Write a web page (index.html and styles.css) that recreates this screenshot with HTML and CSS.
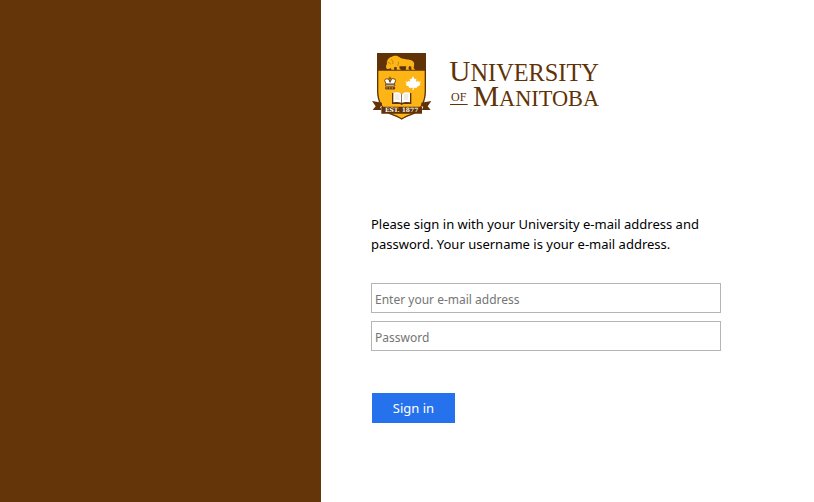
FILE: index.html
```html
<!DOCTYPE html>
<html lang="en">
<head>
<meta charset="utf-8">
<meta name="viewport" content="width=device-width, initial-scale=1">
<title>Sign In</title>
<link rel="stylesheet" href="styles.css">
</head>
<body>
<div class="page">
  <aside class="branding"></aside>
  <main class="content">
    <svg class="logo" viewBox="9 12 684 204" role="img" aria-label="University of Manitoba">
      <!-- shield -->
      <path fill="#fdb515" stroke="#5f3207" stroke-width="4" d="M29 17H172V128C172 160 158 184 136 197Q112 206 101 213Q90 206 66 197C44 184 29 160 29 128Z"/>
      <path fill="#5f3207" d="M27 15H174V68H27Z"/>
      <!-- bison -->
      <path fill="#fdb515" d="M56 62C53 58 54 52 57 48C55 39 61 29 70 27C77 22 89 21 95 28C103 35 116 33 126 36C138 38 140 47 138 53L137 61L142 65H130L130 56L124 54L121 61L125 65H113L115 55L94 55L95 62L100 65H86L86 57L78 58L79 65H70L69 60Q62 65 56 62Z"/>
      <path fill="none" stroke="#a86e0b" stroke-width="2" d="M59 43Q66 43 68 49M70 34Q76 39 75 48M91 41Q94 47 88 53"/>
      <!-- crown -->
      <g stroke="#5f3207" stroke-width="2.5" fill="#fff">
        <path d="M54 108L50 97Q52 90 59 93Q65 95 66 103Q68 95 74 92Q83 91 83 98L79 108Z"/>
        <path d="M66 101V86M61 91H71"/>
        <path d="M53 109H80V114H53Z"/>
        <path fill="#5f3207" d="M53 118H80V123H53Z"/>
      </g>
      <path stroke="#fff" stroke-width="2" stroke-dasharray="4 4" d="M55 120H79"/>
      <!-- maple leaf -->
      <path fill="#fff" d="M135 85L140 94L145 92L144 102L150 98L152 102L159 100L155 107L158 110L146 117L147 120L137 119V127H134V119L123 120L124 117L113 110L116 107L112 100L119 102L121 98L127 102L125 92L130 94Z"/>
      <!-- book -->
      <path fill="#5f3207" d="M72 135H97L101 138L105 135H130V168H106L101 171L96 168H72Z"/>
      <path fill="#fff" d="M76 134Q91 131 100 137V164Q89 160 76 163ZM102 137Q112 131 126 134V163Q112 160 102 164Z"/>
      <path fill="none" stroke="#c9b18f" stroke-width="1.5" d="M81 141H95M81 147H95M81 153H95M107 141H121M107 147H121M107 153H121"/>
      <!-- ribbon -->
      <path fill="#5f3207" d="M12 159L42 164V186H14L23 175ZM190 159L160 164V186H188L179 175Z"/>
      <path fill="#fff" d="M36 176L42 175V189ZM166 176L160 175V189Z"/>
      <path fill="#5f3207" d="M40 176H162V197H40Z"/>
      <text class="motto" x="101" y="193">EST. 1877</text>
      <!-- wordmark -->
      <text class="wordmark" x="244" y="98"><tspan class="initial">U</tspan><tspan class="caps-top">NIVERSITY</tspan></text>
      <text class="wordmark of" x="249" y="159">OF</text>
      <path fill="#5f3207" d="M246 168H299V171H246Z"/>
      <text class="wordmark" x="315" y="173"><tspan class="initial">M</tspan><tspan class="caps-bottom">ANITOBA</tspan></text>
    </svg>
    <form class="login">
      <p class="intro">Please sign in with your University e-mail address and password. Your username is your e-mail address.</p>
      <input class="field" type="email" aria-label="E-mail address" placeholder="Enter your e-mail address">
      <input class="field" type="password" aria-label="Password" placeholder="Password">
      <button class="submit" type="submit">Sign in</button>
    </form>
  </main>
</div>
</body>
</html>
```
FILE: styles.css
```css
* {
  box-sizing: border-box;
}

body {
  margin: 0;
  background: #fff;
  color: #000;
  font-family: "Noto Sans", "Open Sans", sans-serif;
}

.page {
  display: flex;
  min-height: 100vh;
}

.branding {
  flex: 1;
  background: #643508;
}

.content {
  width: 493px;
  padding: 52px 50px;
}

.logo {
  display: block;
  width: 228px;
  height: 68px;
}

.motto {
  fill: #fff;
  font: bold 18px "DejaVu Serif", serif;
  text-anchor: middle;
}

.wordmark {
  fill: #5f3207;
  font-family: "Liberation Serif", serif;
}

.initial {
  font-size: 88px;
}

.caps-top {
  font-size: 73px;
}

.caps-bottom {
  font-size: 67px;
}

.of {
  font-size: 36px;
}

.login {
  display: flex;
  flex-direction: column;
  align-items: flex-start;
  max-width: 350px;
  margin-top: 94px;
}

.intro {
  margin: 0 0 29px;
  font-size: 13px;
  line-height: 20px;
}

.field {
  width: 100%;
  height: 30px;
  margin: 0 0 8px;
  padding: 2px 3px 0;
  border: 1px solid #b5b5b5;
  border-radius: 0;
  background: #fff;
  color: #000;
  font: 12px "Noto Sans", "Open Sans", sans-serif;
}

.field::placeholder {
  color: #757575;
  opacity: 1;
}

.submit {
  height: 30px;
  margin: 34px 0 0 1px;
  min-width: 83px;
  padding: 0 19px;
  border: 0;
  background: #2672ec;
  color: #fff;
  font: 13px "Noto Sans", "Open Sans", sans-serif;
}
```
